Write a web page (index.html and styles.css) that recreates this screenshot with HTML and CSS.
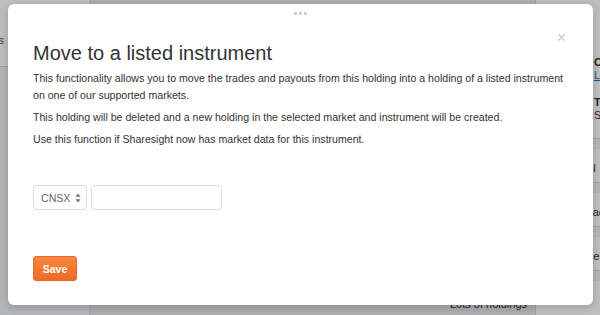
FILE: index.html
```html
<!DOCTYPE html>
<html lang="en">
<head>
    <meta charset="UTF-8">
    <title>Move to a listed instrument</title>
    <link rel="stylesheet" href="styles.css">
</head>
<body>
    <!-- Page behind the dialog -->
    <div class="page">
        <aside class="nav">
            <div class="nav-top"><span class="nav-item">Transactions</span></div>
            <div class="nav-rest"></div>
        </aside>
        <main class="main">
            <p class="main-note">Lots of holdings</p>
        </main>
        <aside class="side">
            <div class="side-block">
                <b>Code</b>
                <a href="#">Life</a>
            </div>
            <div class="side-block">
                <b>Type</b>
                <span>Shares</span>
            </div>
            <div class="side-row">Al</div>
            <div class="side-row">Face</div>
            <div class="side-row">Series</div>
            <div class="side-row"></div>
        </aside>
    </div>

    <div class="backdrop"></div>

    <!-- Dialog -->
    <div class="modal">
        <div class="handle"><i></i><i></i><i></i></div>
        <span class="close">&times;</span>

        <h1>Move to a listed instrument</h1>
        <p>This functionality allows you to move the trades and payouts from this holding into a holding of a listed instrument on one of our supported markets.</p>
        <p>This holding will be deleted and a new holding in the selected market and instrument will be created.</p>
        <p>Use this function if Sharesight now has market data for this instrument.</p>

        <form class="instrument-form">
            <div class="select">
                <span>CNSX</span>
                <svg width="6" height="10" viewBox="0 0 6 10">
                    <path d="M3 0.5 L5.6 3.8 H0.4 Z" fill="#6b7685"/>
                    <path d="M3 9.5 L5.6 6.2 H0.4 Z" fill="#6b7685"/>
                </svg>
            </div>
            <input type="text" class="code-input">
        </form>

        <button type="button" class="save">Save</button>
    </div>
</body>
</html>
```

FILE: styles.css
```css
* {
    box-sizing: border-box;
}

body {
    margin: 0;
    width: 600px;
    height: 315px;
    overflow: hidden;
    position: relative;
    font-family: "Liberation Sans", Arial, sans-serif;
    color: #333;
}

/* Page behind the dialog */
.page {
    display: grid;
    grid-template-columns: 90px 1fr 65px;
    height: 315px;
    overflow: hidden;
    background: #e9e9eb;
}

.nav {
    display: flex;
    flex-direction: column;
    background: #f1f2f5;
    border-right: 1px solid #dcdcdc;
}

.nav-top {
    height: 67px;
    display: flex;
    justify-content: flex-end;
    padding: 34px 85px 0 0;
    background: #fff;
    border-bottom: 1px solid #d4d4d8;
    overflow: hidden;
}

.nav-item {
    white-space: nowrap;
    font-size: 11px;
    color: #4e5a6e;
}

.main {
    padding: 298px 40px 0 360px;
    overflow: hidden;
}

.main-note {
    margin: 0;
    font-size: 11px;
    line-height: 13px;
    white-space: nowrap;
    color: #333;
}

.side {
    background: #fff;
    border-left: 1px solid #d6d6d6;
    padding-top: 56px;
    font-size: 11px;
    overflow: hidden;
}

.side-block {
    display: flex;
    flex-direction: column;
    padding-left: 58px;
    line-height: 13px;
    margin-bottom: 14px;
    white-space: nowrap;
}

.side-block a {
    color: #2a6fb5;
}

.side-block + .side-block {
    margin-bottom: 16px;
}

.side-row {
    height: 44px;
    display: flex;
    align-items: flex-end;
    padding: 0 0 8px 50px;
    border-top: 1px solid #dcdcdc;
    box-shadow: inset 0 10px 0 #f4f4f4;
    white-space: nowrap;
    color: #333;
}

.backdrop {
    position: absolute;
    inset: 0;
    background: rgba(0, 0, 0, 0.25);
}

/* Dialog */
.modal {
    position: absolute;
    left: 8px;
    top: 4px;
    width: 585px;
    height: 301px;
    display: flex;
    flex-direction: column;
    align-items: flex-start;
    padding: 37px 25px 0;
    background: #fff;
    border-radius: 6px;
    box-shadow: 0 2px 10px rgba(0, 0, 0, 0.2);
}

.handle {
    position: absolute;
    top: 8px;
    left: 286px;
    display: flex;
    gap: 2px;
}

.handle i {
    width: 3px;
    height: 3px;
    background: #cdd0d5;
}

.close {
    position: absolute;
    top: 25px;
    right: 27px;
    font-size: 16px;
    line-height: 17px;
    color: #cacaca;
}

h1 {
    margin: 0 0 5px;
    font-size: 20px;
    line-height: 24px;
    font-weight: normal;
    color: #333;
}

p {
    margin: 0 0 5px;
    font-size: 10.6px;
    line-height: 17px;
    color: #333;
}

.instrument-form {
    display: flex;
    gap: 4px;
    margin-top: 32px;
}

.select {
    width: 54px;
    height: 25px;
    display: flex;
    align-items: center;
    justify-content: space-between;
    padding: 0 5px 0 7px;
    border: 1px solid #dcdcdc;
    border-radius: 4px;
    font-size: 10.6px;
    color: #5c6878;
}

.code-input {
    width: 131px;
    height: 25px;
    border: 1px solid #dcdcdc;
    border-radius: 4px;
}

.save {
    margin-top: 46px;
    width: 44px;
    height: 25px;
    padding: 0;
    border: 1px solid #e8672a;
    border-radius: 3px;
    background: linear-gradient(#f8873f, #ef6a22);
    color: #fff;
    font-family: inherit;
    font-size: 10.6px;
    font-weight: bold;
}
```
